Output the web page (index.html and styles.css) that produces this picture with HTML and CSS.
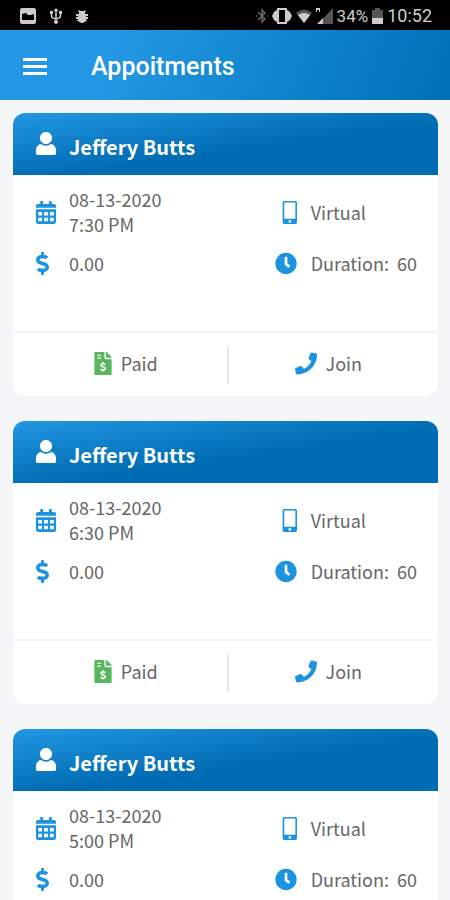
FILE: index.html
```html
<!DOCTYPE html>
<html lang="en">
<head>
<meta charset="utf-8">
<meta name="viewport" content="width=device-width, initial-scale=1">
<title>Appoitments</title>
<link rel="stylesheet" href="styles.css">
</head>
<body>
<svg class="sprite" aria-hidden="true">
  <symbol id="user" viewBox="0 0 448 512"><path d="M224 268c75 0 136-60 136-134S299 0 224 0 88 60 88 134s61 134 136 134zm106 0c-28 26-66 38-106 38s-78-12-106-38C50 272 0 335 0 408v72c0 18 14 32 32 32h384c18 0 32-14 32-32v-72c0-73-50-136-118-140z"/></symbol>
  <symbol id="calendar" viewBox="0 0 448 512"><path fill-rule="evenodd" d="M400 64h-48V16c0-9-7-16-16-16h-32c-9 0-16 7-16 16v48H160V16c0-9-7-16-16-16h-32c-9 0-16 7-16 16v48H48C21 64 0 85 0 112v40h448v-40c0-27-21-48-48-48zM0 184v280c0 27 21 48 48 48h352c27 0 48-21 48-48V184zM52 244h84v76H52zM182 244h84v76h-84zM312 244h84v76h-84zM52 372h84v76H52zM182 372h84v76h-84zM312 372h84v76h-84z"/></symbol>
  <symbol id="dollar" viewBox="0 0 288 512"><path d="M209.200 233.400l-108-31.600C88.700 198.200 80 186.500 80 173.500c0-16.300 13.200-29.500 29.500-29.500h66.300c12.200 0 24.200 3.700 34.200 10.500 6.100 4.100 14.300 3.100 19.500-2l34.800-34c7.100-6.900 6.100-18.400-1.800-24.500C238 74.800 207.400 64.100 176 64V16c0-8.800-7.200-16-16-16h-32c-8.800 0-16 7.200-16 16v48h-2.500C45.800 64-5.400 118.700.5 183.600c4.200 46.100 39.400 83.600 83.800 96.600l102.500 30c12.500 3.700 21.200 15.300 21.200 28.300 0 16.300-13.200 29.500-29.500 29.500h-66.300C100 368 88 364.300 78 357.500c-6.100-4.100-14.300-3.100-19.500 2l-34.800 34c-7.100 6.900-6.100 18.400 1.800 24.500 24.500 19.200 55.100 29.900 86.500 30v48c0 8.800 7.200 16 16 16h32c8.800 0 16-7.200 16-16v-48.200c46.600-.9 90.300-28.600 105.700-72.700 21.500-61.600-14.600-124.800-72.500-141.700z"/></symbol>
  <symbol id="mobile" viewBox="0 0 320 512" preserveAspectRatio="xMaxYMid meet"><path fill-rule="evenodd" d="M280 0H40C16 0 0 16 0 40v432c0 24 16 40 40 40h240c24 0 40-16 40-40V40c0-24-16-40-40-40zM160 484a30 30 0 1 1 0-60 30 30 0 0 1 0 60zM284 384c0 7-5 12-12 12H48c-7 0-12-5-12-12V48c0-7 5-12 12-12h224c7 0 12 5 12 12z"/></symbol>
  <symbol id="clock" viewBox="0 0 512 512"><path fill-rule="evenodd" d="M256 8a248 248 0 1 0 0 496 248 248 0 0 0 0-496zm92 313l-20 25a16 16 0 0 1-22 3l-67-50a40 40 0 0 1-15-31V112a16 16 0 0 1 16-16h32a16 16 0 0 1 16 16v144l58 42a16 16 0 0 1 2 23z"/></symbol>
  <symbol id="phone" viewBox="0 0 512 512"><path d="M493.400 24.600l-104-24c-11.300-2.600-22.900 3.300-27.500 13.900l-48 112c-4.200 9.800-1.400 21.300 6.900 28l60.600 49.600c-36 76.700-98.900 140.500-177.200 177.200l-49.600-60.600c-6.800-8.300-18.200-11.100-28-6.900l-112 48C3.900 366.500-2 378.100.6 389.400l24 104C27.100 504.200 36.700 512 48 512c256.100 0 464-207.500 464-464 0-11.200-7.700-20.900-18.600-23.400z"/></symbol>
  <symbol id="invoice" viewBox="0 0 384 512"><path d="M24 0h200v136c0 13 11 24 24 24h136v328c0 13-11 24-24 24H24c-13 0-24-11-24-24V24C0 11 11 0 24 0zM256 0h6c7 0 13 3 17 7l98 98c4 4 7 10 7 17v6H256z"/><path fill="#fff" d="M64 60h80v30H64zM64 120h80v30H64z"/><path d="M242 280c-14-12-30-17-50-17-26 0-42 12-42 31 0 45 90 23 90 72 0 22-18 36-47 36-21 0-38-6-53-18M192 230v34m0 138v34" fill="none" stroke="#fff" stroke-width="38"/></symbol>
</svg>

<header class="top">
  <div class="status">
    <div class="status-group status-left">
      <svg width="16" height="16" viewBox="0 0 16 16"><path fill-rule="evenodd" d="M2 0h12q2 0 2 2v12q0 2-2 2H2q-2 0-2-2V2q0-2 2-2zM2 12h12V6l-3 1-3 0-2-2-4 1z"/></svg>
      <svg width="12" height="16" viewBox="0 0 12 16"><path d="M6 2v12M1.500 5v3q0 2 4.500 3 4.500-1 4.500-3V5" fill="none" stroke="currentColor" stroke-width="1.500"/><path d="M6 0l2.500 3h-5zM0 3h3v3H0zM9 3h3v3H9z"/><circle cx="6" cy="14" r="2"/></svg>
      <svg width="12" height="13" viewBox="0 0 12 13"><path d="M3 0l1 1h4l1-1 1 1-1 1v2H3V2L2 1zM2 5h8v5q-1 3-4 3t-4-3zM0 4h12v2H0zM0 7h12v2H0zM1 10h10v1H1z"/></svg>
    </div>
    <div class="status-group">
      <svg class="dim" width="12" height="16" viewBox="0 0 12 16"><path d="M2 4l7 7-3 3V2l3 3-7 7M0 8h1m10 0h1" fill="none" stroke="currentColor" stroke-width="1.500"/></svg>
      <svg width="20" height="16" viewBox="0 0 20 16"><path fill-rule="evenodd" d="M5 0h10v2l3 2 2 4-2 4-3 2v2H5v-2l-3-2-2-4 2-4 3-2zM7 2v12h6V2z"/></svg>
      <svg width="16" height="14" viewBox="0 0 16 14"><path fill="#555" d="M0 4q8-7 16 0l-8 10z"/><path d="M2 6q6-4 12 0l-6 8z"/></svg>
      <svg width="17" height="16" viewBox="0 0 17 16"><path fill="#555" d="M17 0v16H2z"/><path d="M0 0h4v4H3V2H1v2H0zM7 10v6H1z"/></svg>
      <span>34%</span>
      <svg width="11" height="16" viewBox="0 0 11 16"><path fill="#555" d="M3 0h5v2h3v9H0V2h3z"/><path d="M0 10h11v6H0z"/></svg>
      <time class="time">10:52</time>
    </div>
  </div>
  <div class="appbar">
    <button class="menu" aria-label="Open menu"><svg width="24" height="17" viewBox="0 0 24 17"><path d="M0 1.500h24M0 8.500h24M0 15.500h24" stroke="currentColor" stroke-width="3"/></svg></button>
    <h1>Appoitments</h1>
  </div>
</header>

<main class="list">
  <article class="card">
    <h2 class="card-head"><svg class="icon"><use href="#user"/></svg>Jeffery Butts</h2>
    <div class="card-body">
      <p class="cell"><svg class="icon"><use href="#calendar"/></svg><span>08-13-2020<br>7:30 PM</span></p>
      <p class="cell side"><svg class="icon"><use href="#mobile"/></svg><span>Virtual</span></p>
      <p class="cell"><svg class="icon dollar"><use href="#dollar"/></svg><span>0.00</span></p>
      <p class="cell side"><svg class="icon"><use href="#clock"/></svg><span>Duration:&nbsp; 60</span></p>
    </div>
    <div class="card-foot">
      <button class="action"><svg class="icon paid"><use href="#invoice"/></svg>Paid</button>
      <button class="action"><svg class="icon"><use href="#phone"/></svg>Join</button>
    </div>
  </article>
  <article class="card">
    <h2 class="card-head"><svg class="icon"><use href="#user"/></svg>Jeffery Butts</h2>
    <div class="card-body">
      <p class="cell"><svg class="icon"><use href="#calendar"/></svg><span>08-13-2020<br>6:30 PM</span></p>
      <p class="cell side"><svg class="icon"><use href="#mobile"/></svg><span>Virtual</span></p>
      <p class="cell"><svg class="icon dollar"><use href="#dollar"/></svg><span>0.00</span></p>
      <p class="cell side"><svg class="icon"><use href="#clock"/></svg><span>Duration:&nbsp; 60</span></p>
    </div>
    <div class="card-foot">
      <button class="action"><svg class="icon paid"><use href="#invoice"/></svg>Paid</button>
      <button class="action"><svg class="icon"><use href="#phone"/></svg>Join</button>
    </div>
  </article>
  <article class="card">
    <h2 class="card-head"><svg class="icon"><use href="#user"/></svg>Jeffery Butts</h2>
    <div class="card-body">
      <p class="cell"><svg class="icon"><use href="#calendar"/></svg><span>08-13-2020<br>5:00 PM</span></p>
      <p class="cell side"><svg class="icon"><use href="#mobile"/></svg><span>Virtual</span></p>
      <p class="cell"><svg class="icon dollar"><use href="#dollar"/></svg><span>0.00</span></p>
      <p class="cell side"><svg class="icon"><use href="#clock"/></svg><span>Duration:&nbsp; 60</span></p>
    </div>
  </article>
</main>
</body>
</html>
```
FILE: styles.css
```css
* { box-sizing: border-box; }
body {
  margin: 0;
  height: 100vh;
  display: flex;
  flex-direction: column;
  background: #f3f5f7;
  color: #666;
  font: 18px/25px "Noto Sans CJK JP", "Noto Sans", sans-serif;
}
h1, h2, p { margin: 0; }
svg { display: block; flex: none; fill: currentColor; }
button { border: 0; padding: 0; background: none; color: inherit; font: inherit; }
.sprite { position: absolute; width: 0; height: 0; }

.top { flex: none; font-family: Roboto, sans-serif; }
.status {
  display: flex;
  justify-content: space-between;
  align-items: center;
  height: 30px;
  padding: 2px 18px 0 20px;
  background: #000;
  color: #ccc;
  font-size: 17px;
  line-height: 20px;
}
.status-group { display: flex; align-items: center; gap: 4px; }
.status-left { gap: 14px; }
.dim { color: #666; }
.time { font-size: 18px; }
.appbar {
  display: flex;
  align-items: center;
  gap: 44px;
  height: 70px;
  padding: 3px 23px 0;
  background: linear-gradient(110deg, #2397e3 25%, #0070b6);
  color: #fff;
}
.menu { line-height: 0; }
h1 { font-size: 25px; font-weight: 500; line-height: 32px; }

.list {
  flex: 1;
  min-height: 0;
  overflow-y: auto;
  scrollbar-width: none;
  padding: 13px 12px 0 13px;
}
.card { margin-bottom: 25px; border-radius: 12px; background: #fff; overflow: hidden; }
.icon { width: 22px; height: 23px; }
.card-head {
  display: flex;
  align-items: baseline;
  gap: 12px;
  height: 62px;
  padding: 19px 22px 0;
  background: linear-gradient(to bottom right, #2397e3, #006cb3 55%);
  color: #fff;
  font-size: 20px;
  font-weight: 700;
  line-height: 30px;
}
.card-body {
  display: grid;
  grid-template-columns: 1fr auto;
  align-content: start;
  row-gap: 14px;
  height: 156px;
  padding: 12px 21px 0 22px;
}
.cell { display: flex; align-items: center; gap: 12px; }
.cell .icon, .action .icon { color: #1c93df; }
.dollar { width: 15px; margin-right: 7px; }
.side { gap: 14px; }
.card-foot { display: grid; grid-template-columns: 1fr 1fr; padding: 13px 10px 12px 12px; border-top: 2px solid #f3f5f7; }
.action { display: flex; justify-content: center; align-items: center; gap: 9px; height: 38px; padding-bottom: 3px; }
.action + .action { border-left: 2px solid #e8e8e8; }
.action .paid { width: 18px; color: #57b75c; }
```
